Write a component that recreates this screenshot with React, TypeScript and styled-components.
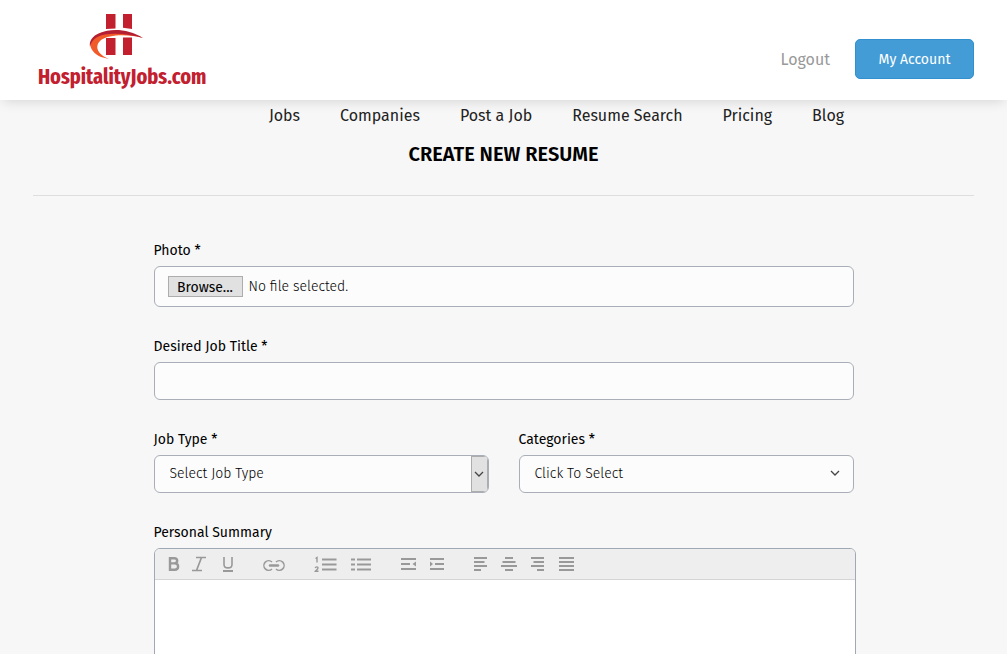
import React from "react";
import styled, { createGlobalStyle } from "styled-components";

const GlobalStyle = createGlobalStyle`
  *, *::before, *::after { box-sizing: border-box; }
  body {
    margin: 0;
    background: #f7f7f7;
    color: #000;
    font-family: "Fira Sans", "Noto Sans", sans-serif;
    font-size: 14px;
  }
  button, input, select { font-family: inherit; }
`;

const Header = styled.header`
  position: relative;
  display: flex;
  align-items: center;
  justify-content: space-between;
  height: 100px;
  padding: 0 33px 0 38px;
  background: #fff;
  box-shadow: 0 4px 12px -3px rgba(0, 0, 0, 0.15);
`;

const LogoLink = styled.a`
  display: flex;
  flex-direction: column;
  padding-top: 6px;
  color: #c2202f;
  text-decoration: none;
`;

const LogoMark = styled.svg`
  display: block;
  width: 56px;
  height: 48px;
  margin-left: 51px;
`;

const LogoText = styled.span`
  font: bold 22px/34px "Fira Sans Extra Condensed", "Fira Sans", sans-serif;
`;

const Account = styled.div`
  display: flex;
  align-items: center;
  gap: 25px;
  padding-top: 18px;
`;

const LogoutLink = styled.a`
  color: #999;
  font-size: 16px;
  text-decoration: none;
`;

const AccountButton = styled.button`
  width: 119px;
  height: 40px;
  border: 1px solid #3190cd;
  border-radius: 5px;
  background: #439cd6;
  color: #fff;
  font-size: 14px;
  font-weight: 400;
`;

const Nav = styled.nav`
  display: flex;
  justify-content: center;
  gap: 40px;
  padding-left: 106px;
`;

const NavLink = styled.a`
  color: #222;
  font-size: 16px;
  line-height: 32px;
  text-decoration: none;
`;

const Main = styled.main`
  max-width: 1007px;
  margin: 0 auto;
  padding: 0 33px;
`;

const Title = styled.h1`
  margin: 0;
  padding: 8px 0 27px;
  border-bottom: 1px solid #dedede;
  font-size: 20px;
  font-weight: 600;
  line-height: 28px;
  text-align: center;
  text-transform: uppercase;
`;

const Form = styled.form`
  max-width: 700px;
  margin: 0 auto;
  padding: 45px 0 40px;
`;

const Field = styled.div`
  display: flex;
  flex: 1;
  flex-direction: column;
  gap: 5px;
  margin-bottom: 30px;
`;

const FieldRow = styled.div`
  display: flex;
  gap: 30px;
`;

const Label = styled.label`
  font-size: 14px;
  font-weight: 400;
  line-height: 20px;
`;

const control = `
  width: 100%;
  border: 1px solid #a9aeb8;
  border-radius: 6px;
  background: #fcfcfc;
`;

const FilePicker = styled.label`
  ${control}
  position: relative;
  display: flex;
  align-items: center;
  gap: 6px;
  height: 41px;
  padding: 0 13px;
  font-size: 14px;
  font-weight: 300;
  line-height: 21px;
`;

const HiddenFile = styled.input`
  position: absolute;
  inset: 0;
  opacity: 0;
`;

const Browse = styled.span`
  width: 75px;
  height: 21px;
  border: 1px solid #adadad;
  background: #e1e1e1;
  font-weight: 400;
  text-align: center;
`;

const TextInput = styled.input`
  ${control}
  height: 38px;
  padding: 0 15px;
  font-size: 14px;
`;

const SelectBox = styled.div`
  ${control}
  display: grid;
  grid-template-columns: 1fr auto;
  height: 38px;
  overflow: hidden;
`;

const Select = styled.select`
  grid-area: 1 / 1 / 2 / 3;
  appearance: none;
  padding: 0 15px 2px;
  border: 0;
  background: transparent;
  color: #000;
  font-size: 14px;
  font-weight: 300;
`;

const Arrow = styled.span<{ $boxed?: boolean }>`
  grid-area: 1 / 2 / 2 / 3;
  display: flex;
  align-items: center;
  justify-content: center;
  width: ${(p) => (p.$boxed ? "17px" : "36px")};
  padding-bottom: ${(p) => (p.$boxed ? "0" : "2px")};
  border: ${(p) => (p.$boxed ? "1px solid #adadad" : "0")};
  background: ${(p) => (p.$boxed ? "#e1e1e1" : "transparent")};
  pointer-events: none;
`;

const Editor = styled.div`
  width: calc(100% + 2px);
  border: 1px solid #a0a8b4;
  border-radius: 6px;
  background: #fff;
  overflow: hidden;
`;

const Toolbar = styled.div`
  display: flex;
  gap: 16px;
  padding-left: 2px;
  border-bottom: 1px solid #d5d5d5;
  background: #eee;
`;

const ToolGroup = styled.div`
  display: flex;
`;

const ToolButton = styled.button<{ $wide?: boolean }>`
  width: ${(p) => (p.$wide ? "35px" : "28px")};
  height: 30px;
  padding: 0;
  border: 0;
  background: transparent;
  color: #999;

  svg {
    display: block;
    width: 100%;
    height: 100%;
  }
`;

const TextArea = styled.div`
  min-height: 200px;
  padding: 15px;
  outline: none;
`;

const navItems = ["Jobs", "Companies", "Post a Job", "Resume Search", "Pricing", "Blog"];

type Tool = { name: string; wide?: boolean; art: React.ReactNode };

const lines = (d: string) => <path d={d} fill="none" stroke="currentColor" strokeWidth="2" />;

const toolGroups: Tool[][] = [
  [
    {
      name: "Bold",
      art: (
        <path
          d="M13 9.200h4.200c4 0 4 5.200 0 5.200h-4.200zM13 14.400h4.800c4.400 0 4.400 6.400 0 6.400h-4.800z"
          fill="none"
          stroke="currentColor"
          strokeWidth="2.400"
        />
      ),
    },
    {
      name: "Italic",
      art: <path d="M11 8.500h10M7 21.500h10M16.500 8.500l-5 13" fill="none" stroke="currentColor" strokeWidth="1.700" />,
    },
    {
      name: "Underline",
      art: (
        <>
          <path d="M11 8v7.500c0 4.500 8 4.500 8 0V8" fill="none" stroke="currentColor" strokeWidth="1.600" />
          {lines("M10 22h10")}
        </>
      ),
    },
  ],
  [
    {
      name: "Link",
      wide: true,
      art: (
        <>
          <path
            d="M15 13a4.800 4.800 0 1 0 0 7M19 13a4.800 4.800 0 1 1 0 7"
            fill="none"
            stroke="currentColor"
            strokeWidth="1.500"
          />
          <path d="M13 16.500h8" stroke="currentColor" strokeWidth="2.500" strokeLinecap="round" />
        </>
      ),
    },
  ],
  [
    {
      name: "Numbered list",
      wide: true,
      art: (
        <>
          {lines("M14 10.500h14.500M14 15.500h14.500M14 20.500h14.500")}
          <path
            d="M7.500 9.500l1.500-1v5M7.200 19c.4-1.600 3.200-1.400 2.800.2-.2 1-2 2-2.600 3h3.100"
            fill="none"
            stroke="currentColor"
            strokeWidth="1.400"
          />
        </>
      ),
    },
    {
      name: "Bulleted list",
      wide: true,
      art: lines("M8 10.500h4M8 15.500h4M8 20.500h4M14 10.500h14M14 15.500h14M14 20.500h14"),
    },
  ],
  [
    {
      name: "Decrease indent",
      art: (
        <>
          {lines("M7 10h15M7 15h9M7 20h15")}
          <path d="M22 12.500v5l-3.500-2.500z" fill="currentColor" />
        </>
      ),
    },
    {
      name: "Increase indent",
      art: (
        <>
          {lines("M8 10h14M13 15h9M8 20h14")}
          <path d="M8 12.500v5l3-2.500z" fill="currentColor" />
        </>
      ),
    },
  ],
  [
    { name: "Align left", art: lines("M8 9h13M8 13h10.500M8 17h13M8 21h7") },
    { name: "Align center", art: lines("M11 9h8M8.500 13h13M7 17h16M11 21h8") },
    { name: "Align right", art: lines("M9 9h13M11.500 13h10.500M9 17h13M15 21h7") },
    { name: "Justify", art: lines("M9 9h15M9 13h15M9 17h15M9 21h15") },
  ],
];

const Chevron = () => (
  <svg width="10" height="6" viewBox="0 0 10 6" aria-hidden="true">
    <path d="M1 1l4 4 4-4" fill="none" stroke="#444" strokeWidth="1.300" />
  </svg>
);

export default function App() {
  return (
    <>
      <GlobalStyle />
      <Header>
        <LogoLink href="#">
          <LogoMark viewBox="0 0 56 48" aria-hidden="true">
            <path d="M17 2h9.500v14.500L17 17zM34 2h9v15l-9-1.200zM17 26h9.500v17H17zM34 25.500h9V43h-9z" fill="#c2202f" />
            <path d="M54 26C40 19 22 17 11 21-1 26-3 38 12 45L20 47C8 42 5 34 12 28c8-6 28-6 42-2z" fill="#f15a29" />
            <path d="M54 26C40 17 22 16 11 21 3 24 0 29 1 35c1-6 6-11 15-12.500 12-2 26 0 38 3.500z" fill="#b51f34" />
          </LogoMark>
          <LogoText>HospitalityJobs.com</LogoText>
        </LogoLink>
        <Account>
          <LogoutLink href="#">Logout</LogoutLink>
          <AccountButton type="button">My Account</AccountButton>
        </Account>
      </Header>
      <Nav>
        {navItems.map((item) => (
          <NavLink href="#" key={item}>
            {item}
          </NavLink>
        ))}
      </Nav>
      <Main>
        <Title>Create New Resume</Title>
        <Form>
          <Field>
            <Label htmlFor="photo">Photo *</Label>
            <FilePicker>
              <HiddenFile id="photo" type="file" />
              <Browse>Browse...</Browse>
              <span>No file selected.</span>
            </FilePicker>
          </Field>
          <Field>
            <Label htmlFor="title">Desired Job Title *</Label>
            <TextInput id="title" type="text" />
          </Field>
          <FieldRow>
            <Field>
              <Label htmlFor="type">Job Type *</Label>
              <SelectBox>
                <Select id="type">
                  <option>Select Job Type</option>
                </Select>
                <Arrow $boxed>
                  <Chevron />
                </Arrow>
              </SelectBox>
            </Field>
            <Field>
              <Label htmlFor="categories">Categories *</Label>
              <SelectBox>
                <Select id="categories">
                  <option>Click To Select</option>
                </Select>
                <Arrow>
                  <Chevron />
                </Arrow>
              </SelectBox>
            </Field>
          </FieldRow>
          <Field>
            <Label as="span" id="summary-label">
              Personal Summary
            </Label>
            <Editor>
              <Toolbar role="toolbar">
                {toolGroups.map((group, i) => (
                  <ToolGroup key={i}>
                    {group.map((tool) => (
                      <ToolButton type="button" key={tool.name} $wide={tool.wide} aria-label={tool.name}>
                        <svg viewBox={tool.wide ? "0 0 35 30" : "0 0 28 30"} aria-hidden="true">
                          {tool.art}
                        </svg>
                      </ToolButton>
                    ))}
                  </ToolGroup>
                ))}
              </Toolbar>
              <TextArea contentEditable role="textbox" aria-multiline="true" aria-labelledby="summary-label" />
            </Editor>
          </Field>
        </Form>
      </Main>
    </>
  );
}
